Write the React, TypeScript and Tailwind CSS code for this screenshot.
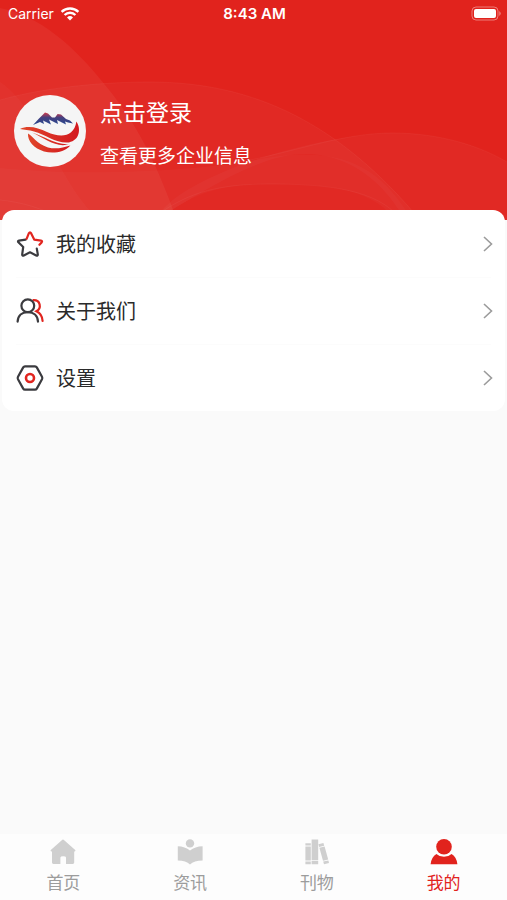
import type { ReactNode } from 'react';

type MenuItem = {
  id: string;
  label: string;
  icon: ReactNode;
};

type Tab = {
  id: string;
  label: string;
  icon: ReactNode;
};

const StarIcon = () => (
  <svg viewBox="0 0 28 28" className="size-7" fill="none" strokeWidth="2.2" strokeLinejoin="round" strokeLinecap="round">
    <path
      stroke="#3b3b3f"
      d="M9.6 9.6 3 10.6Q1.4 11 2.4 12.3L7.2 17 6.2 24.4Q6.2 26.2 7.8 25.4L14 22.3 20.2 25.4Q21.8 26.2 21.8 24.4L20.8 18.6"
    />
    <path stroke="#e1251f" d="M10.6 8.8 12.8 3.4Q14 1.4 15.2 3.4L18.2 9.6 25 10.6Q26.8 11 25.6 12.4L23.4 14.8" />
  </svg>
);

const PeopleIcon = () => (
  <svg viewBox="0 0 28 28" className="size-7" fill="none" strokeWidth="2.2" strokeLinecap="round">
    <path stroke="#e1251f" d="M17.4 3.2C24.4 3 26 11 20.4 14.2 24.4 16 26.4 19.4 26.6 24" />
    <circle cx="11.8" cy="8.8" r="6.4" stroke="#3b3b3f" />
    <path stroke="#3b3b3f" d="M1.6 24.6C2 18.6 6 15.2 11.8 15.2S21.6 18.6 22 24.6" />
  </svg>
);

const SettingIcon = () => (
  <svg viewBox="0 0 28 28" className="size-7" fill="none" strokeWidth="2.2" strokeLinejoin="round">
    <path stroke="#3b3b3f" d="M9 2.4H19Q20.2 2.4 20.8 3.4L26 12.8Q26.6 14 26 15.2L20.8 24.6Q20.2 25.6 19 25.6H9Q7.8 25.6 7.2 24.6L2 15.2Q1.4 14 2 12.8L7.2 3.4Q7.8 2.4 9 2.4Z" />
    <circle cx="14" cy="14" r="4" stroke="#e1251f" strokeWidth="2.6" />
  </svg>
);

const HomeIcon = () => (
  <svg viewBox="0 0 28 28" className="size-7" fill="currentColor">
    <path d="M14 1.6Q14.6 1.6 15.2 2.2L26.2 12Q27 13.2 25.6 13.4H25.2V24.6Q25.2 26 23.8 26H17V19.6Q17 18.2 14.2 18.2T11.4 19.6V26H4.4Q3 26 3 24.6V13.4H2.4Q1 13.2 1.8 12L12.8 2.2Q13.4 1.6 14 1.6Z" />
  </svg>
);

const ReadIcon = () => (
  <svg viewBox="0 0 28 28" className="size-7" fill="currentColor">
    <circle cx="14" cy="5.4" r="4.2" />
    <path d="M1.8 8.2Q9 8.4 14 12.4 19 8.4 26.6 8.2V22.6Q18 22.8 14 26.4 10 22.8 1.8 22.6Z" />
  </svg>
);

const BooksIcon = () => (
  <svg viewBox="0 0 28 28" className="size-7" fill="currentColor">
    <path d="M2.4 5.2h5.4v2.4H2.4zM2.4 8.4h5.4v14.2H2.4zM2.4 23.4h5.4V26.2H2.4zM8.6 1.4h6.6v20.8H8.6zM8.6 23h6.6V26.2H8.6z" />
    <path d="m15.4 6.2 5-1.2.8 2.8-5 1.2zM16.4 9.8l5.2-1.2 3.6 13-5.2 1.2zM20.2 23.6l5.2-1.2.6 2.6-5 1.2z" />
  </svg>
);

const MineIcon = () => (
  <svg viewBox="0 0 28 28" className="size-7" fill="currentColor">
    <circle cx="14" cy="8.8" r="7.8" />
    <path d="M6.4 16Q9.4 18.8 14 18.8T21.6 16Q26.6 19 27.4 26.2H.6Q1.4 19 6.4 16Z" />
  </svg>
);

const menus: MenuItem[] = [
  { id: 'favorite', label: '我的收藏', icon: <StarIcon /> },
  { id: 'about', label: '关于我们', icon: <PeopleIcon /> },
  { id: 'setting', label: '设置', icon: <SettingIcon /> },
];

const tabs: Tab[] = [
  { id: 'home', label: '首页', icon: <HomeIcon /> },
  { id: 'news', label: '资讯', icon: <ReadIcon /> },
  { id: 'journal', label: '刊物', icon: <BooksIcon /> },
  { id: 'mine', label: '我的', icon: <MineIcon /> },
];

const activeTab = 'mine';

function StatusBar() {
  return (
    <div className="relative grid h-7 grid-cols-3 items-center pl-2 pr-1.5 font-['Inter','Liberation_Sans',sans-serif] text-sm leading-5">
      <div className="flex items-center gap-1.5">
        <span>Carrier</span>
        <svg viewBox="0 0 20 14" className="h-3.5 w-5" fill="none" stroke="currentColor" strokeWidth="2.4">
          <path d="M1.6 4.8a12.2 12.2 0 0 1 16.8 0M4.6 8a7.6 7.6 0 0 1 10.8 0" />
          <path d="M10 13.4 7 10.4a4.3 4.3 0 0 1 6 0Z" fill="currentColor" stroke="none" />
        </svg>
      </div>
      <span className="text-center text-[15px] font-semibold">8:43 AM</span>
      <svg viewBox="0 0 30 16" className="h-4 w-[30px] justify-self-end" fill="none">
        <rect x="1" y="1" width="26" height="13" rx="4" stroke="#fff" strokeOpacity=".4" />
        <rect x="3" y="3" width="22" height="9" rx="2" fill="#fff" />
        <path d="M28.4 5q2.4 2.5 0 5Z" fill="#fff" fillOpacity=".5" />
      </svg>
    </div>
  );
}

function Logo() {
  return (
    <svg viewBox="0 0 72 72" className="size-18 shrink-0">
      <defs>
        <linearGradient id="mountain" x1="0" y1="0" x2="0" y2="1">
          <stop offset="0" stopColor="#d23a4a" />
          <stop offset=".4" stopColor="#45407f" />
          <stop offset="1" stopColor="#25478f" />
        </linearGradient>
        <linearGradient id="ribbon" x1="0" y1="0" x2="1" y2="0">
          <stop offset="0" stopColor="#e0462a" />
          <stop offset="1" stopColor="#d3191f" />
        </linearGradient>
      </defs>
      <circle cx="36" cy="36" r="36" fill="#f5f5f5" />
      <path
        fill="url(#mountain)"
        d="M19 30 25 23.6 31 17.6 34 18.4 38 22.6 41 22.4 43.6 19 47 19.4 52 24 56 25.6 59 28.6 54 27.4 51 26.4 52 29.6 46 26.6 43 25 44 29 39 26.6 35 24.4 37 29.4 32 27 29 25.6 30 29 26 27Z"
      />
      <path
        fill="url(#ribbon)"
        d="M6 34C14 30 24 32.6 33 37 46 43 60 42.6 62.4 26.6 67.4 34 65.4 45.6 55 47.4 43 49 32 39.6 20 36.4 15 35 10 34.6 6 34Z"
      />
      <path fill="url(#ribbon)" d="M18 37.6C30 41 42 50.6 56 49 42 53.4 32 44 18 37.6Z" />
      <path fill="url(#ribbon)" d="M14 38.6C19 41 22 49 34 52.4 42 54.4 49 52.6 56.4 50.4 50 57.4 39 58.8 30 56.4 20 53.6 13.4 46 14 38.6Z" />
    </svg>
  );
}

// translucent waves behind the profile
function HeaderWaves() {
  return (
    <svg viewBox="0 0 507 220" preserveAspectRatio="none" className="absolute inset-0 size-full" fill="#fff" aria-hidden="true">
      <path fillOpacity=".05" d="M0 8C40 16 74 46 105 85 140 127 158 168 177 220H0Z" />
      <path fillOpacity=".025" d="M0 82C40 108 62 190 100 220H0Z" />
      <path fillOpacity=".03" d="M0 100C50 86 110 82 150 82 255 82 340 124 420 220H0Z" />
      <path fillOpacity=".03" d="M155 220C180 172 330 133 392 133 440 133 480 146 507 162V220H405C378 172 340 154 305 154 260 154 205 190 155 220Z" />
      <path fillOpacity=".025" d="M0 168C80 176 180 172 250 161 340 142 380 166 412 220H395C370 184 310 184 270 184 220 184 190 194 160 220H0Z" />
      <g fill="none" stroke="#fff" strokeOpacity=".04">
        <path d="M0 100C50 86 110 82 150 82 255 82 340 124 420 220" />
        <path d="M250 160C300 150 345 133 392 133 440 133 480 146 507 162" />
        <path d="M160 213C190 192 220 184 270 184 320 184 370 188 395 213" />
        <path d="M0 200C20 202 45 208 60 220" />
      </g>
    </svg>
  );
}

export default function App() {
  return (
    <div className="flex min-h-screen flex-col bg-[#fafafa] font-['Noto_Sans_CJK_SC',sans-serif]">
      {/* Header */}
      <header className="relative bg-[#e1231d] pb-[53px] text-white">
        <HeaderWaves />
        <StatusBar />

        <button className="relative mt-[67px] flex w-full items-center gap-3.5 px-3.5 text-left">
          <Logo />
          <span className="flex flex-col gap-4">
            <span className="text-[23px] leading-8">点击登录</span>
            <span className="text-[19px] leading-6">查看更多企业信息</span>
          </span>
        </button>
      </header>

      {/* Menu */}
      <main className="relative -mt-2.5 flex-1 px-0.5">
        <ul className="rounded-xl bg-white pt-px">
          {menus.map((item) => (
            <li key={item.id} className="group">
              <button className="flex h-[66px] w-full items-center gap-3 pl-3.5 pr-3 text-left text-xl text-[#2a2a2a]">
                {item.icon}
                <span className="flex-1">{item.label}</span>
                <svg viewBox="0 0 10 16" className="h-4 w-2.5" fill="none" stroke="#9b9b9b" strokeWidth="1.6">
                  <path d="m1 1 7.5 7L1 15" />
                </svg>
              </button>
              <div className="mx-3.5 h-px bg-[#fcfcfc] group-last:hidden" />
            </li>
          ))}
        </ul>
      </main>

      {/* Tab bar */}
      <nav className="sticky bottom-0 grid grid-cols-4 bg-[#fdfdfd] py-1">
        {tabs.map((tab) => (
          <a
            key={tab.id}
            href={`#${tab.id}`}
            className={`flex flex-col items-center text-[17px] leading-7 ${tab.id === activeTab ? 'text-[#e1231d]' : 'text-[#9c9c9c]'}`}
          >
            <span className={tab.id === activeTab ? 'h-[30px]' : 'h-[30px] text-[#cfcfcf]'}>{tab.icon}</span>
            {tab.label}
          </a>
        ))}
      </nav>
    </div>
  );
}
